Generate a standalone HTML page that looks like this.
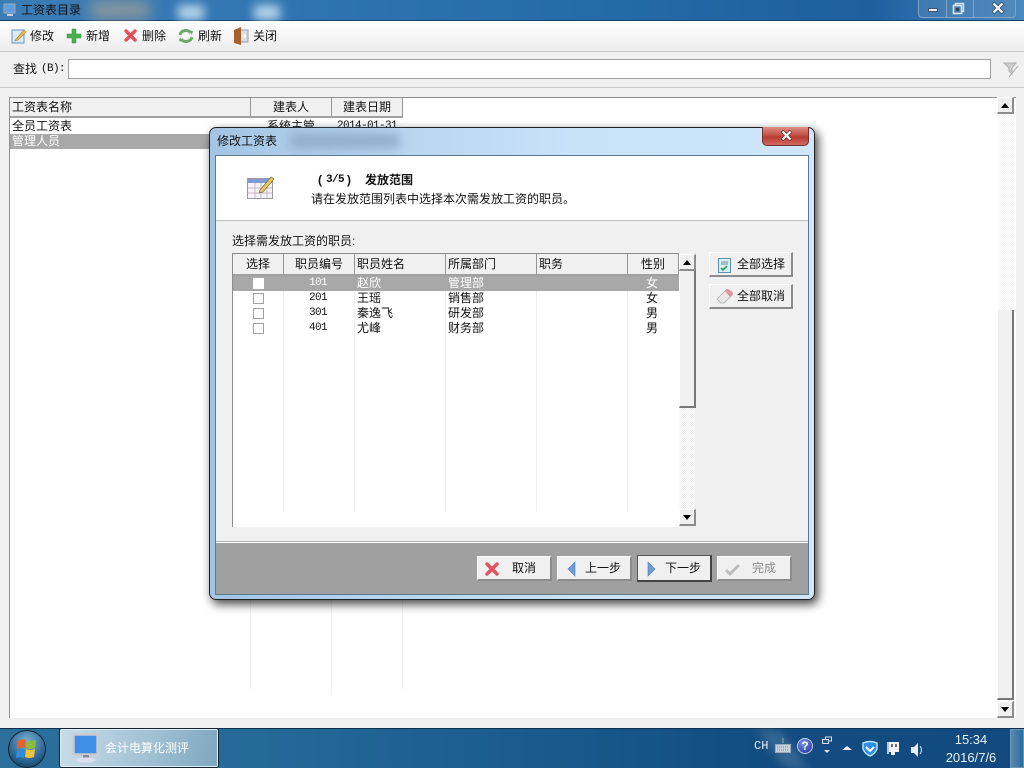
<!DOCTYPE html>
<html><head><meta charset="utf-8"><style>
*{box-sizing:border-box}
html,body{margin:0;padding:0;width:1024px;height:768px;overflow:hidden;background:#f0f0f0}
body{position:relative;font:12px/14px "WenQuanYi Zen Hei","Liberation Sans","Noto Sans CJK SC",sans-serif;color:#111}
.a{position:absolute}
.t{position:absolute;white-space:nowrap;line-height:14px}
.c{text-align:center}
.n{font:11px/14px "Liberation Mono",monospace;letter-spacing:-.6px}
.btn{position:absolute;background:#f0f0f0;border:1px solid #fff;border-right:2px solid #8c8c8c;border-bottom:2px solid #8c8c8c}
.hd{position:absolute;background:#f0f0f0;border-right:1px solid #959595;border-bottom:2px solid #a0a0a0}
svg{position:absolute;overflow:visible}
</style></head><body>

<!-- title bar -->
<div class="a" style="left:0;top:0;width:1024px;height:21px;background:linear-gradient(90deg,#3c7db6 0,#2f74b1 30%,#256aa8 60%,#1d5f9f 85%,#4b89bf 100%);border-bottom:1px solid #16406e"></div>
<div class="a" style="left:90px;top:0;width:60px;height:20px;background:#b9a98e;filter:blur(7px);opacity:.6"></div>
<div class="a" style="left:178px;top:5px;width:26px;height:15px;background:#cfe6f6;filter:blur(5px);opacity:.85"></div>
<div class="a" style="left:254px;top:5px;width:26px;height:15px;background:#cfe6f6;filter:blur(5px);opacity:.85"></div>
<svg style="left:3px;top:3px" width="14" height="15"><rect x="1" y="1" width="11" height="9" fill="#5f9fe0" stroke="#9ab" /><rect x="4" y="11" width="6" height="2" fill="#ccd"/></svg>
<div class="t" style="left:21px;top:3px;color:#111">工资表目录</div>
<div class="a" style="left:918px;top:0;width:98px;height:18px;background:rgba(90,140,190,.4);border:1px solid #83a5c5;border-top:0;border-radius:0 0 4px 4px"></div>
<div class="a" style="left:946px;top:0;width:1px;height:17px;background:#83a5c5"></div>
<div class="a" style="left:973px;top:0;width:1px;height:17px;background:#83a5c5"></div>
<div class="a" style="left:928px;top:8px;width:10px;height:4px;background:#e8eef4;border:1px solid #456"></div>
<svg style="left:953px;top:3px" width="12" height="12"><rect x="2.5" y="0.5" width="8" height="8" fill="none" stroke="#dde6ee" stroke-width="1.4"/><rect x="0.5" y="2.5" width="8" height="8" fill="#4b7fb0" stroke="#dde6ee" stroke-width="1.6"/><rect x="3" y="5" width="3" height="3" fill="#345"/></svg>
<svg style="left:992px;top:3px" width="12" height="10"><path d="M1 0l10 10M11 0L1 10" stroke="#345" stroke-width="4"/><path d="M1.5 .5l9 9M10.5 .5l-9 9" stroke="#eef3f7" stroke-width="2.4"/></svg>

<!-- toolbar -->
<div class="a" style="left:0;top:21px;width:1024px;height:31px;background:linear-gradient(#fff,#ececec);border-bottom:1px solid #c8c8c8"></div>
<svg style="left:11px;top:27px" width="16" height="18"><rect x="1" y="3" width="12" height="13" fill="#dbeaf8" stroke="#6b93bb"/><path d="M5 12l8-9 2 2-8 8-3 1z" fill="#e8bb55" stroke="#b58a33" stroke-width=".7"/></svg>
<div class="t" style="left:30px;top:29px">修改</div>
<svg style="left:67px;top:29px" width="14" height="14"><path d="M5 0h4v5h5v4H9v5H5V9H0V5h5z" fill="#4caf50" stroke="#2f8a3a" stroke-width=".5"/></svg>
<div class="t" style="left:86px;top:29px">新增</div>
<svg style="left:124px;top:29px" width="13" height="13"><path d="M2 2l9 9M11 2l-9 9" stroke="#e3525c" stroke-width="3.4" stroke-linecap="round"/></svg>
<div class="t" style="left:142px;top:29px">删除</div>
<svg style="left:178px;top:28px" width="16" height="16"><path d="M2 7C3 2 10 1 13 5M14 9c-1 5-8 6-11 2" fill="none" stroke="#6fa968" stroke-width="3"/><path d="M11 2l4 1-1 4zM5 14l-4-1 1-4z" fill="#6fa968"/></svg>
<div class="t" style="left:198px;top:29px">刷新</div>
<svg style="left:234px;top:27px" width="15" height="18"><rect x="5" y="3" width="9" height="12" fill="#d9dee2" stroke="#99a"/><path d="M0 3l7-3v18l-7-2z" fill="#a7602c"/><path d="M7 9h5M10 7l2 2-2 2" stroke="#fff" fill="none"/></svg>
<div class="t" style="left:253px;top:29px">关闭</div>

<!-- find bar -->
<div class="a" style="left:0;top:87px;width:1024px;height:1px;background:#c8c8c8"></div>
<div class="t" style="left:13px;top:62px">查找</div>
<div class="t n" style="left:41px;top:62px">(B):</div>
<div class="a" style="left:68px;top:59px;width:923px;height:20px;background:#fff;border:1px solid #a0a0a0"></div>
<svg style="left:1003px;top:62px" width="17" height="17"><path d="M1 1h12l-4 5v6l-3-3V6z" fill="#ccc" stroke="#b0b0b0"/><path d="M15 4L6 15" stroke="#b0b0b0"/></svg>

<!-- main list -->
<div class="a" style="left:9px;top:97px;width:1007px;height:621px;background:#fff;border-left:1px solid #909090;border-top:1px solid #909090"></div>
<div class="hd" style="left:10px;top:98px;width:241px;height:20px"></div>
<div class="hd" style="left:251px;top:98px;width:81px;height:20px"></div>
<div class="hd" style="left:332px;top:98px;width:71px;height:20px"></div>
<div class="t" style="left:12px;top:100px">工资表名称</div>
<div class="t c" style="left:251px;top:100px;width:80px">建表人</div>
<div class="t c" style="left:332px;top:100px;width:70px">建表日期</div>
<div class="t" style="left:12px;top:119px">全员工资表</div>
<div class="t c" style="left:251px;top:119px;width:80px">系统主管</div>
<div class="t c n" style="left:332px;top:119px;width:70px">2014-01-31</div>
<div class="a" style="left:10px;top:134px;width:240px;height:15px;background:#a8a8a8"></div>
<div class="t" style="left:12px;top:134px;color:#fff">管理人员</div>
<div class="a" style="left:250px;top:600px;width:1px;height:90px;background:#f3f3f3"></div>
<div class="a" style="left:331px;top:600px;width:1px;height:95px;background:#f3f3f3"></div>
<div class="a" style="left:402px;top:600px;width:1px;height:90px;background:#f3f3f3"></div>

<!-- main scrollbar -->
<div class="a" style="left:998px;top:98px;width:16px;height:620px;background:repeating-conic-gradient(#f5f5f5 0 25%,#fff 0 50%) 0 0/2px 2px"></div>
<div class="btn" style="left:997px;top:97px;width:17px;height:17px"></div>
<div class="a" style="left:1001px;top:103px;border:4px solid transparent;border-top:0;border-bottom:5px solid #000"></div>
<div class="a" style="left:997px;top:310px;width:17px;height:390px;background:#f0f0f0;border-left:1px solid #fff;border-right:2px solid #777;border-bottom:2px solid #777"></div>
<div class="btn" style="left:997px;top:701px;width:17px;height:17px"></div>
<div class="a" style="left:1001px;top:707px;border:4px solid transparent;border-bottom:0;border-top:5px solid #000"></div>

<!-- dialog -->
<div class="a" style="left:209px;top:127px;width:606px;height:473px;border-radius:7px;background:linear-gradient(90deg,#a3c4e4 0,#b4d3ef 25%,#c8e2f8 60%,#cfe6fb 100%);border:1px solid #222;box-shadow:3px 4px 10px rgba(0,0,0,.75)"></div>
<div class="a" style="left:290px;top:133px;width:110px;height:16px;background:#8ba6c6;filter:blur(5px);opacity:.8"></div>
<div class="t" style="left:217px;top:134px">修改工资表</div>
<div class="a" style="left:762px;top:127px;width:47px;height:19px;border-radius:0 0 5px 5px;background:linear-gradient(#dd8f85,#bf4a40 50%,#b83a32 55%,#d26a5e);border:1px solid #6e3030;border-top:0"></div>
<svg style="left:781px;top:131px" width="11" height="9"><path d="M1 0l9 9M10 0L1 9" stroke="#6e3030" stroke-width="3.6"/><path d="M1.5 .5l8 8M9.5 .5l-8 8" stroke="#fff" stroke-width="2.2"/></svg>
<div class="a" style="left:215px;top:155px;width:594px;height:440px;background:#f0f0f0;border:1px solid #5a7890"></div>
<div class="a" style="left:216px;top:156px;width:592px;height:65px;background:#fff;border-bottom:1px solid #c4c4c4"></div>
<svg style="left:247px;top:174px" width="28" height="26"><rect x="0.5" y="4.5" width="25" height="20" fill="#f4f4f8" stroke="#9a9aa8"/><rect x="1" y="5" width="24" height="4" fill="#7f9ad4"/><path d="M1 14h24M1 19h24M8 9v15M14 9v15M20 9v15" stroke="#c8b8c8"/><path d="M13 16L24 3l3 2-11 13-4 1z" fill="#e8c860" stroke="#7a6a40" stroke-width=".7"/></svg>
<div class="t" style="left:318px;top:173px;font-weight:bold">(</div>
<div class="t n" style="left:326px;top:173px;font-weight:bold">3/5</div>
<div class="t" style="left:347px;top:173px;font-weight:bold">)</div>
<div class="t" style="left:365px;top:173px;font-weight:bold">发放范围</div>
<div class="t" style="left:311px;top:192px">请在发放范围列表中选择本次需发放工资的职员。</div>
<div class="t" style="left:232px;top:234px">选择需发放工资的职员:</div>

<!-- dialog grid -->
<div class="a" style="left:232px;top:253px;width:447px;height:274px;background:#fff;border-left:1px solid #8c8c8c;border-top:1px solid #8c8c8c"></div>
<div class="hd" style="left:233px;top:254px;width:51px;height:22px"></div>
<div class="hd" style="left:284px;top:254px;width:71px;height:22px"></div>
<div class="hd" style="left:355px;top:254px;width:91px;height:22px"></div>
<div class="hd" style="left:446px;top:254px;width:91px;height:22px"></div>
<div class="hd" style="left:537px;top:254px;width:91px;height:22px"></div>
<div class="hd" style="left:628px;top:254px;width:51px;height:22px"></div>
<div class="a" style="left:283px;top:276px;width:1px;height:235px;background:#f0f0f0"></div>
<div class="a" style="left:354px;top:276px;width:1px;height:235px;background:#f0f0f0"></div>
<div class="a" style="left:445px;top:276px;width:1px;height:235px;background:#f0f0f0"></div>
<div class="a" style="left:536px;top:276px;width:1px;height:235px;background:#f0f0f0"></div>
<div class="a" style="left:627px;top:276px;width:1px;height:235px;background:#f0f0f0"></div>
<div class="t c" style="left:233px;top:257px;width:50px">选择</div>
<div class="t c" style="left:284px;top:257px;width:70px">职员编号</div>
<div class="t" style="left:357px;top:257px">职员姓名</div>
<div class="t" style="left:448px;top:257px">所属部门</div>
<div class="t" style="left:539px;top:257px">职务</div>
<div class="t c" style="left:628px;top:257px;width:50px">性别</div>

<div class="a" style="left:233px;top:276px;width:446px;height:15px;background:#a8a8a8"></div>
<div class="a" style="left:253px;top:278px;width:11px;height:11px;background:#fff"></div>
<div class="a" style="left:253px;top:293px;width:11px;height:11px;border:1px solid #a0a0a0;background:#fff"></div>
<div class="a" style="left:253px;top:308px;width:11px;height:11px;border:1px solid #a0a0a0;background:#fff"></div>
<div class="a" style="left:253px;top:323px;width:11px;height:11px;border:1px solid #a0a0a0;background:#fff"></div>

<div class="t c n" style="left:283px;top:276px;width:70px;color:#fff">101</div>
<div class="t" style="left:357px;top:276px;color:#fff">赵欣</div>
<div class="t" style="left:448px;top:276px;color:#fff">管理部</div>
<div class="t c" style="left:627px;top:276px;width:50px;color:#fff">女</div>

<div class="t c n" style="left:283px;top:291px;width:70px">201</div>
<div class="t" style="left:357px;top:291px">王瑶</div>
<div class="t" style="left:448px;top:291px">销售部</div>
<div class="t c" style="left:627px;top:291px;width:50px">女</div>

<div class="t c n" style="left:283px;top:306px;width:70px">301</div>
<div class="t" style="left:357px;top:306px">秦逸飞</div>
<div class="t" style="left:448px;top:306px">研发部</div>
<div class="t c" style="left:627px;top:306px;width:50px">男</div>

<div class="t c n" style="left:283px;top:321px;width:70px">401</div>
<div class="t" style="left:357px;top:321px">尤峰</div>
<div class="t" style="left:448px;top:321px">财务部</div>
<div class="t c" style="left:627px;top:321px;width:50px">男</div>

<!-- dialog grid scrollbar -->
<div class="a" style="left:679px;top:254px;width:16px;height:272px;background:repeating-conic-gradient(#f0f0f0 0 25%,#fff 0 50%) 0 0/2px 2px"></div>
<div class="btn" style="left:679px;top:254px;width:17px;height:17px"></div>
<div class="a" style="left:683px;top:260px;border:4px solid transparent;border-top:0;border-bottom:5px solid #000"></div>
<div class="a" style="left:679px;top:271px;width:17px;height:137px;background:#f0f0f0;border-left:1px solid #fff;border-right:2px solid #777;border-bottom:2px solid #777"></div>
<div class="btn" style="left:679px;top:509px;width:17px;height:17px"></div>
<div class="a" style="left:683px;top:515px;border:4px solid transparent;border-bottom:0;border-top:5px solid #000"></div>

<!-- side buttons -->
<div class="btn" style="left:709px;top:252px;width:84px;height:25px"></div>
<svg style="left:718px;top:258px" width="14" height="16"><rect x="0.5" y="0.5" width="12" height="14" fill="#d8eef4" stroke="#5a90b0"/><path d="M3 4h7M3 6h7" stroke="#6a8aa0"/><path d="M3 10l2 2 4-4" stroke="#2d9a50" stroke-width="1.6" fill="none"/></svg>
<div class="t" style="left:737px;top:257px">全部选择</div>
<div class="btn" style="left:709px;top:284px;width:84px;height:25px"></div>
<svg style="left:716px;top:289px" width="17" height="15"><path d="M1 10L10 1q2-1 3 0l3 2q1 1 0 3l-8 8H5z" fill="#e8e8e8" stroke="#aaa" stroke-width=".7"/><path d="M9 2q2-2 4-1l3 2q1 1 0 3l-2 2z" fill="#e88e9e"/></svg>
<div class="t" style="left:737px;top:289px">全部取消</div>

<!-- footer -->
<div class="a" style="left:216px;top:541px;width:592px;height:2px;background:#fff;border-top:1px solid #b0b0b0"></div>
<div class="a" style="left:216px;top:543px;width:592px;height:51px;background:#a0a0a0"></div>

<div class="btn" style="left:477px;top:556px;width:75px;height:25px"></div>
<svg style="left:485px;top:562px" width="14" height="14"><path d="M2 2l10 10M12 2L2 12" stroke="#e3525c" stroke-width="3.4" stroke-linecap="round"/></svg>
<div class="t" style="left:512px;top:561px">取消</div>

<div class="btn" style="left:557px;top:556px;width:75px;height:25px"></div>
<svg style="left:567px;top:562px" width="9" height="14"><path d="M8 0v14L1 7z" fill="#6d9ed8" stroke="#4f7fb8" stroke-width=".6"/></svg>
<div class="t" style="left:585px;top:561px">上一步</div>

<div class="a" style="left:637px;top:555px;width:75px;height:27px;background:#f0f0f0;border:1px solid #555;border-right:2px solid #444;border-bottom:2px solid #444"></div>
<svg style="left:647px;top:562px" width="9" height="14"><path d="M1 0v14l7-7z" fill="#6d9ed8" stroke="#4f7fb8" stroke-width=".6"/></svg>
<div class="t" style="left:665px;top:561px">下一步</div>

<div class="btn" style="left:717px;top:556px;width:75px;height:25px"></div>
<svg style="left:725px;top:562px" width="15" height="14"><path d="M1 8l4 4 9-9" stroke="#bdbdbd" stroke-width="3" fill="none"/></svg>
<div class="t" style="left:752px;top:561px;color:#8a8a8a">完成</div>

<!-- bottom frame / taskbar -->
<div class="a" style="left:0;top:728px;width:1024px;height:40px;background:linear-gradient(90deg,#2b6f9a 0,#246a97 25%,#1b5c8d 50%,#124c80 75%,#124a7e 100%);border-top:1px solid #0d2f52"></div>
<div class="a" style="left:770px;top:729px;width:24px;height:39px;background:rgba(255,255,255,.14);filter:blur(5px);transform:skewX(35deg)"></div>
<div class="a" style="left:8px;top:730px;width:38px;height:38px;border-radius:50%;background:radial-gradient(circle at 50% 30%,#7fb0d4,#24608c 65%,#0c2c48);border:1px solid #123"></div>
<svg style="left:15px;top:737px" width="24" height="24"><path d="M3 4q4-3 8-1l-1 8q-4-2-8 1z" fill="#e8632c"/><path d="M12 3q4 2 9 0l-1 8q-5 2-9 0z" fill="#8cbc3c"/><path d="M2 13q4-2 8 0l-1 8q-4-2-8 0z" fill="#2e8fd8"/><path d="M11 12q4 2 9 0l-1 8q-5 2-9 0z" fill="#f2c13a"/></svg>

<div class="a" style="left:60px;top:729px;width:158px;height:38px;border-radius:2px;background:linear-gradient(100deg,#c8dce8,#9fbfd2 60%,#7ea7c0);border:1px solid #e4f0f8;box-shadow:0 0 0 1px #123"></div>
<svg style="left:72px;top:733px" width="28" height="31"><rect x="1.5" y="1.5" width="24" height="20" rx="1" fill="#3f8fe8" stroke="#c8ccd0" stroke-width="2.4"/><path d="M11 22h6v3h-6z" fill="#889"/><ellipse cx="14" cy="27" rx="10" ry="2.6" fill="#dde"/></svg>
<div class="t" style="left:105px;top:741px;color:#fff">会计电算化测评</div>

<div class="t" style="left:754px;top:739px;color:#e8eef4;font:12px/14px 'Liberation Mono',monospace">CH</div>
<svg style="left:775px;top:738px" width="16" height="16"><path d="M8 0v5" stroke="#9ab"/><rect x="0.5" y="6.5" width="15" height="8" fill="#c5d2dc" stroke="#9ab"/><path d="M2 9h12M2 12h12" stroke="#789" stroke-dasharray="1 1"/></svg>
<div class="a" style="left:797px;top:738px;width:16px;height:16px;border-radius:50%;background:radial-gradient(circle at 40% 30%,#7a8fe8,#1c2c9a);border:1px solid #c8d0ea"></div>
<div class="t c" style="left:797px;top:739px;width:16px;color:#fff;font:bold 12px/14px 'Liberation Sans',sans-serif">?</div>
<svg style="left:822px;top:736px" width="10" height="18"><rect x="3.5" y="1" width="6" height="4" fill="none" stroke="#dde"/><rect x="0.5" y="3.5" width="6" height="4" fill="#1b5c8d" stroke="#dde"/><path d="M2 14h6l-3 3z" fill="#dde"/></svg>
<div class="a" style="left:842px;top:746px;border:5px solid transparent;border-top:0;border-bottom:4px solid #e8eef4"></div>
<svg style="left:862px;top:741px" width="16" height="16"><path d="M1 2q7-3 14 0v6q-2 5-7 7-5-2-7-7z" fill="#2f8fe0" stroke="#bfe4ff" stroke-width="1.4"/><path d="M4 6l4 4 4-4" stroke="#fff" stroke-width="2" fill="none"/></svg>
<svg style="left:886px;top:741px" width="16" height="17"><path d="M3 1h10v10H9v3H5v-3H3z" fill="#f2f2f2"/><path d="M6 3v3M10 3v3" stroke="#333" stroke-width="1.4"/><path d="M2 1v12" stroke="#fff" stroke-width="1.4"/></svg>
<svg style="left:910px;top:743px" width="16" height="14"><path d="M1 4h3l4-4v14l-4-4H1z" fill="#e8eef4"/><path d="M10 3q3 4 0 8" stroke="#e8eef4" fill="none"/></svg>
<div class="t c" style="left:945px;top:733px;width:52px;color:#e8f0f6;font:13px/14px 'Liberation Sans',sans-serif">15:34</div>
<div class="t c" style="left:940px;top:751px;width:62px;color:#e8f0f6;font:13px/14px 'Liberation Sans',sans-serif">2016/7/6</div>
<div class="a" style="left:1010px;top:729px;width:14px;height:39px;background:linear-gradient(90deg,#5a8ab0,#2c6a9a);border:1px solid #6b95b8"></div>
</body></html>
